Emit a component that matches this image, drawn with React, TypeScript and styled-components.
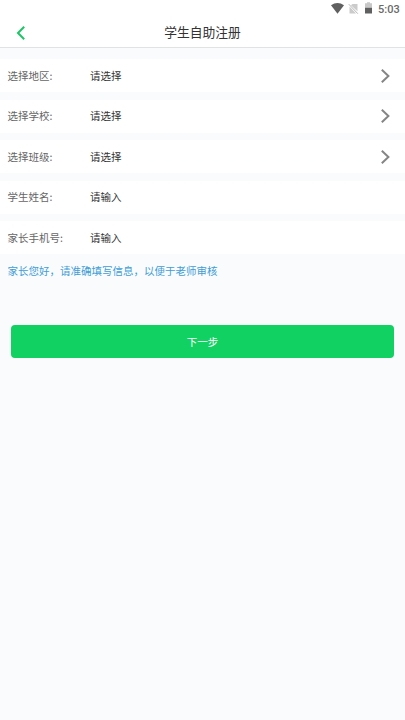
import React from "react";
import styled, { createGlobalStyle } from "styled-components";

const GlobalStyle = createGlobalStyle`
  * { box-sizing: border-box; }
  body {
    margin: 0;
    background: #fafbfd;
    font-family: "Noto Sans CJK SC", sans-serif;
  }
`;

const Screen = styled.main`
  display: flex;
  flex-direction: column;
  min-height: 720px;
  background: #fafbfd;
`;

const StatusBar = styled.div`
  display: flex;
  align-items: center;
  justify-content: flex-end;
  height: 18px;
  padding-right: 6px;
  background: #fff;
`;

const StatusIcons = styled.svg`
  width: 44px;
  height: 18px;
  margin-right: 4px;
`;

const Clock = styled.span`
  width: 21px;
  padding-top: 1px;
  color: #6a6a6a;
  font: 500 11px/17px Roboto, sans-serif;
  white-space: nowrap;
`;

const Header = styled.header`
  display: grid;
  grid-template-columns: 42px 1fr 42px;
  align-items: center;
  height: 30px;
  background: #fff;
  border-bottom: 1px solid #e1e2e4;
`;

const BackButton = styled.button`
  display: flex;
  height: 29px;
  padding: 0 0 0 16px;
  align-items: center;
  border: 0;
  background: none;
`;

const Title = styled.h1`
  margin: 0;
  padding-bottom: 2px;
  color: #333;
  font-size: 12.75px;
  font-weight: 400;
  line-height: 27px;
  text-align: center;
`;

const Form = styled.form`
  display: flex;
  flex-direction: column;
`;

const Fields = styled.div`
  display: flex;
  flex-direction: column;
  gap: 7.5px;
  padding-top: 11px;
`;

const Row = styled.div`
  display: grid;
  grid-template-columns: 82.5px 1fr auto;
  align-items: center;
  height: 33px;
  padding: 0 14px 0 7.5px;
  background: #fff;
  font-size: 10.5px;
  line-height: 16px;
`;

const Label = styled.span`
  color: #666;
`;

const Value = styled.span`
  color: #333;
`;

const Hint = styled.p`
  margin: 8px 7.5px 0;
  color: #3f9dd8;
  font-size: 10.5px;
  line-height: 18px;
`;

const NextButton = styled.button`
  height: 33.5px;
  margin: 44.5px 11px 0;
  padding: 1px 0 0;
  border: 0;
  border-radius: 4px;
  background: #11d162;
  color: #fff;
  font: 400 10.5px/32px "Noto Sans CJK SC", sans-serif;
`;

const fields = [
  { label: "选择地区:", value: "请选择", select: true },
  { label: "选择学校:", value: "请选择", select: true },
  { label: "选择班级:", value: "请选择", select: true },
  { label: "学生姓名:", value: "请输入", select: false },
  { label: "家长手机号:", value: "请输入", select: false },
];

export default function App() {
  return (
    <Screen>
      <GlobalStyle />
      <StatusBar>
        <StatusIcons viewBox="0 0 44 18" fill="none" aria-hidden="true">
          <path d="M1 5.2Q7.5 0.8 14 5.2L7.5 13.8Z" fill="#606060" />
          <path d="M22.5 4H27.5V11.2L20.9 5.3ZM19.5 6.5L26 13.5H19.5Z" fill="#cbcbcb" />
          <path d="M18.8 4.2L27.8 13.7" stroke="#b5b5b5" strokeWidth="1" />
          <path d="M35 3.2H37V2.2H40V3.2H42V8H35Z" fill="#c8c8c8" />
          <path d="M35 7.8H42V13.5H35Z" fill="#606060" />
        </StatusIcons>
        <Clock>5:03</Clock>
      </StatusBar>
      <Header>
        <BackButton aria-label="返回">
          <svg width="10" height="16" viewBox="0 0 10 16" fill="none">
            <path d="M8.2 1.8L2 8L8.2 14.2" stroke="#1cc565" strokeWidth="2" />
          </svg>
        </BackButton>
        <Title>学生自助注册</Title>
      </Header>
      <Form onSubmit={(e) => e.preventDefault()}>
        <Fields>
          {fields.map((field) => (
            <Row key={field.label}>
              <Label>{field.label}</Label>
              <Value>{field.value}</Value>
              {field.select && (
                <svg width="11" height="16" viewBox="0 0 11 16" fill="none">
                  <path d="M1.8 1.8L8.4 8L1.8 14.2" stroke="#858585" strokeWidth="2" />
                </svg>
              )}
            </Row>
          ))}
        </Fields>
        <Hint>家长您好，请准确填写信息，以便于老师审核</Hint>
        <NextButton type="submit">下一步</NextButton>
      </Form>
    </Screen>
  );
}
